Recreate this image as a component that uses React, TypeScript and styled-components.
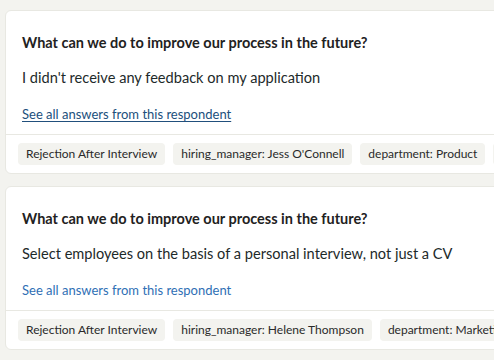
import * as React from 'react'
import styled, { createGlobalStyle } from 'styled-components'

const GlobalStyle = createGlobalStyle`
  html, body {
    margin: 0;
    padding: 0;
    background: #f3f3ef;
    overflow: hidden;
  }
  body {
    font-family: Lato, "Open Sans", sans-serif;
    color: #1d2626;
  }
`

interface Answer {
  question: string
  answer: string
  visited?: boolean
  tags: string[]
}

const answers: Answer[] = [
  {
    question: 'What can we do to improve our process in the future?',
    answer: "I didn't receive any feedback on my application",
    visited: true,
    tags: ['Rejection After Interview', "hiring_manager: Jess O'Connell", 'department: Product', 'bu: Consumer'],
  },
  {
    question: 'What can we do to improve our process in the future?',
    answer: 'Select employees on the basis of a personal interview, not just a CV',
    tags: ['Rejection After Interview', 'hiring_manager: Helene Thompson', 'department: Marketing', 'bu: Consumer'],
  },
]

const AnswerCard: React.FC<{ item: Answer }> = ({ item }) => (
  <Card>
    <CardBody>
      <Question>{item.question}</Question>
      <AnswerText>{item.answer}</AnswerText>
      <RespondentLink href="#" visited={item.visited}>
        See all answers from this respondent
      </RespondentLink>
    </CardBody>
    <TagRow>
      {item.tags.map((tag) => (
        <Tag key={tag}>{tag}</Tag>
      ))}
    </TagRow>
  </Card>
)

export default function App() {
  return (
    <>
      <GlobalStyle />
      <Page>
        {answers.map((item, i) => (
          <AnswerCard key={i} item={item} />
        ))}
      </Page>
    </>
  )
}

const Page = styled.div`
  display: flex;
  flex-direction: column;
  gap: 12px;
  padding: 10px 0 0 5px;
  width: 700px;
`

const Card = styled.section`
  width: 640px;
  background: #ffffff;
  border: 1px solid #e8e8e2;
  border-radius: 6px;
`

const CardBody = styled.div`
  display: flex;
  flex-direction: column;
  align-items: flex-start;
  padding: 22px 16px 11px;
  border-bottom: 1px solid #e8e8e2;
`

const Question = styled.h3`
  margin: 0;
  font-size: 14.5px;
  line-height: 20px;
  font-weight: 700;
  color: #1f2222;
`

const AnswerText = styled.p`
  margin: 14px 0 0;
  font-size: 14.6px;
  line-height: 22px;
  color: #1d2a2a;
`

const RespondentLink = styled.a<{ visited?: boolean }>`
  margin-top: 16px;
  font-size: 13px;
  line-height: 18px;
  color: ${(p) => (p.visited ? '#214f7c' : '#2f6fb5')};
  text-decoration: ${(p) => (p.visited ? 'underline' : 'none')};
  text-underline-offset: 2px;
`

const TagRow = styled.div`
  display: flex;
  gap: 8px;
  padding: 8px 12px 8px;
`

const Tag = styled.span`
  flex: none;
  background: #f3f3ef;
  border-radius: 4px;
  padding: 0 8px;
  font-size: 12px;
  line-height: 22px;
  color: #2a2a2a;
  white-space: nowrap;
`
